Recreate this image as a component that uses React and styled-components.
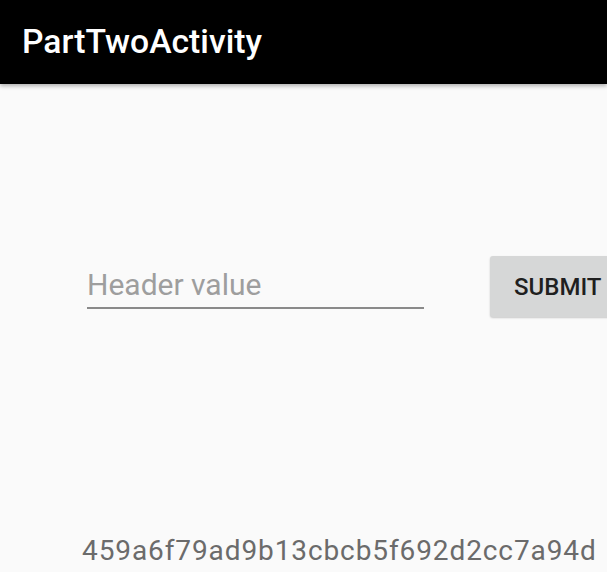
import React from "react";
import styled, { createGlobalStyle } from "styled-components";

const Global = createGlobalStyle`
  html, body { margin: 0; padding: 0; background: #fafafa; }
  body { font-family: Roboto, "Noto Sans", sans-serif; overflow: hidden; }
`;

const Screen = styled.div`
  width: 607px;
  height: 572px;
  display: flex;
  flex-direction: column;
  background: #fafafa;
  overflow: hidden;
`;

const AppBar = styled.header`
  height: 84px;
  flex: none;
  box-sizing: border-box;
  background: #000;
  display: flex;
  align-items: center;
  padding-left: 22px;
  padding-bottom: 2px;
  box-shadow: 0 2px 4px rgba(0, 0, 0, 0.3);
  position: relative;
  z-index: 1;
`;

const Title = styled.h1`
  margin: 0;
  color: #fff;
  font-size: 33.7px;
  line-height: 33px;
  font-weight: 500;
  font-family: Roboto, sans-serif;
`;

const Content = styled.main`
  flex: 1;
  display: flex;
  flex-direction: column;
  padding-top: 172px;
`;

const FormRow = styled.div`
  display: flex;
  align-items: flex-start;
  padding-left: 87px;
  gap: 66px;
`;

const Field = styled.div`
  flex: none;
  width: 337px;
  height: 53px;
  border-bottom: 2px solid #8a8a8a;
  box-sizing: border-box;
  display: flex;
  align-items: flex-end;
  padding-bottom: 7px;
`;

const Placeholder = styled.span`
  color: #9e9e9e;
  font-size: 30px;
  line-height: 30px;
  font-family: Roboto, sans-serif;
`;

const Button = styled.button`
  flex: none;
  width: 130px;
  height: 61px;
  border: none;
  border-radius: 3px;
  background: #d6d7d7;
  box-shadow: 0 1px 2px rgba(0, 0, 0, 0.2);
  color: #1f1f1f;
  font-family: Roboto, sans-serif;
  font-size: 24px;
  line-height: 24px;
  font-weight: 500;
  text-align: left;
  padding: 0 0 0 24px;
`;

const Hash = styled.div`
  margin-top: auto;
  padding-left: 82px;
  padding-bottom: 7px;
  color: #6b6b6b;
  font-size: 28px;
  line-height: 28px;
  letter-spacing: 0.9px;
  font-family: Roboto, sans-serif;
`;

export default function App() {
  return (
    <Screen>
      <Global />
      <AppBar>
        <Title>PartTwoActivity</Title>
      </AppBar>
      <Content>
        <FormRow>
          <Field>
            <Placeholder>Header value</Placeholder>
          </Field>
          <Button>SUBMIT</Button>
        </FormRow>
        <Hash>459a6f79ad9b13cbcb5f692d2cc7a94d</Hash>
      </Content>
    </Screen>
  );
}
